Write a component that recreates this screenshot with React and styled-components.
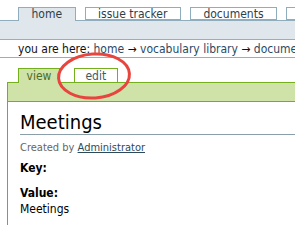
import React from "react";
import styled, { createGlobalStyle } from "styled-components";

const FONT = `"DejaVu Sans Condensed", "Liberation Sans", Arial, sans-serif`;

const Global = createGlobalStyle`
  html, body { margin: 0; padding: 0; background: #fff; overflow: hidden; }
  body { font-family: ${FONT}; color: #111; }
`;

const Page = styled.div`
  position: relative;
  width: 295px;
  height: 225px;
  overflow: hidden;
`;

const TabRow = styled.div`
  display: flex;
  gap: 9px;
  padding: 7px 0 0 18px;
  margin-bottom: -1px;
  position: relative;
  z-index: 1;
  white-space: nowrap;
`;

const TopTab = styled.div`
  flex: none;
  box-sizing: border-box;
  min-width: 20px;
  padding: 0 12.5px;
  font-size: 12px;
  line-height: 12px;
  color: #2f3f4a;
  border: 1px solid #8fadbd;
  border-bottom: ${(p) => (p.$active ? "none" : "1px solid #8fadbd")};
  background: ${(p) => (p.$active ? "#dfe6ec" : "#fff")};
  height: ${(p) => (p.$active ? "14px" : "13px")};
`;

const Bar = styled.div`
  height: 18px;
  background: #dfe6ec;
  border-top: 1px solid #8fadbd;
  border-bottom: 1px solid #9aaeb9;
`;

const Crumbs = styled.div`
  height: 17px;
  padding-left: 18px;
  font-size: 12px;
  line-height: 19px;
  white-space: nowrap;
  overflow: hidden;
  color: #111;
  border-bottom: 1px solid #9aaeb9;
`;

const CrumbLink = styled.a`
  color: #2c4a63;
  text-decoration: none;
`;

const SubTabs = styled.div`
  display: flex;
  gap: 14px;
  padding: 10px 0 0 18px;
  margin-bottom: -1px;
  position: relative;
  z-index: 1;
`;

const SubTab = styled.div`
  box-sizing: border-box;
  height: 15px;
  padding: 0 ${(p) => (p.$active ? "7.5px" : "10.5px")};
  font-size: 12px;
  line-height: 14px;
  border: 1px solid #74b01e;
  border-bottom: ${(p) => (p.$active ? "none" : "1px solid #74b01e")};
  background: ${(p) => (p.$active ? "#cfe2a8" : "#fff")};
  color: ${(p) => (p.$active ? "#4f6a22" : "#3e5a68")};
`;

const Panel = styled.div`
  margin-left: 7px;
  border-left: 1px solid #74b01e;
  border-top: 1px solid #74b01e;
  min-height: 160px;
`;

const Band = styled.div`
  height: 18px;
  background: #cfe2a8;
  border-bottom: 1px solid #74b01e;
`;

const Content = styled.div`
  padding: 8px 0 0 12px;
`;

const Title = styled.h1`
  margin: 0;
  font-size: 20px;
  font-weight: normal;
  line-height: 24px;
  color: #000;
  border-bottom: 1px solid #8a9faa;
`;

const Meta = styled.div`
  margin-top: 6px;
  font-size: 11px;
  line-height: 14px;
  color: #666;
`;

const UserLink = styled.a`
  color: #2d4a5a;
  text-decoration: underline;
`;

const Label = styled.div`
  margin-top: ${(p) => p.$gap || 0}px;
  font-size: 12px;
  line-height: 16px;
  font-weight: bold;
  color: #000;
`;

const Value = styled.div`
  font-size: 12px;
  line-height: 16px;
  color: #000;
`;

const Annotation = styled.svg`
  position: absolute;
  left: 56px;
  top: 51px;
  pointer-events: none;
  z-index: 5;
`;

export default function App() {
  return (
    <Page>
      <Global />
      <TabRow>
        <TopTab $active>home</TopTab>
        <TopTab>issue tracker</TopTab>
        <TopTab>documents</TopTab>
        <TopTab aria-label="more" />
      </TabRow>
      <Bar />
      <Crumbs>
        you are here: <CrumbLink href="#">home</CrumbLink> →{" "}
        <CrumbLink href="#">vocabulary library</CrumbLink> →{" "}
        <CrumbLink href="#">documents</CrumbLink>
      </Crumbs>
      <SubTabs>
        <SubTab $active>view</SubTab>
        <SubTab>edit</SubTab>
      </SubTabs>
      <Panel>
        <Band />
        <Content>
          <Title>Meetings</Title>
          <Meta>
            Created by <UserLink href="#">Administrator</UserLink>
          </Meta>
          <Label $gap={5}>Key:</Label>
          <Label $gap={9}>Value:</Label>
          <Value>Meetings</Value>
        </Content>
      </Panel>
      <Annotation width="80" height="52" viewBox="0 0 80 52">
        <ellipse cx="38" cy="25" rx="35.5" ry="22" fill="none" stroke="#e8453f" strokeWidth="3" transform="rotate(-4 38 25)" />
      </Annotation>
    </Page>
  );
}
